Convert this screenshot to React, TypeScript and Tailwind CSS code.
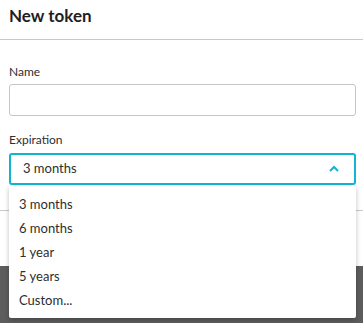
import React from "react";

const options = ["3 months", "6 months", "1 year", "5 years", "Custom..."];

export default function App() {
  return (
    <div className="relative w-[363px] h-[323px] overflow-hidden bg-[#5d5d5d] font-['Lato',sans-serif] text-[#2e2e2e]">
      <div className="bg-white">
        <div className="h-[40px] border-b border-[#c9c9c9] pl-[9px] pt-[5px]">
          <h2 className="text-[17px] leading-[22px] font-bold text-[#1e1e1e]">New token</h2>
        </div>
        <div className="pl-[9px] pr-[7px] pt-[24px] h-[170px]">
          <div className="text-[12px] leading-[16px] mb-[4px]">Name</div>
          <div className="h-[32px] border border-[#c6c6c6] rounded-[3px]" />
          <div className="text-[12px] leading-[16px] mt-[16px] mb-[5px]">Expiration</div>
          <div className="relative">
            <div className="h-[32px] border-2 border-[#12b5d1] rounded-[3px] flex items-center justify-between pl-[12px] pr-[12px]">
              <span className="text-[13px]">3 months</span>
              <svg width="12" height="8" viewBox="0 0 12 8" className="mr-[2px]">
                <path d="M2 6 L6 2 L10 6" fill="none" stroke="#12b5d1" strokeWidth="2" />
              </svg>
            </div>
            <div className="absolute left-0 right-0 top-[33px] z-10 bg-white rounded-b-[2px] shadow-[0_2px_5px_rgba(0,0,0,0.25)] pt-[7px] pb-[5px]">
              {options.map((o) => (
                <div key={o} className="h-[24px] flex items-center px-[10px] text-[13px]">
                  {o}
                </div>
              ))}
            </div>
          </div>
        </div>
        <div className="h-[56px] border-t border-[#c9c9c9]" />
      </div>
    </div>
  );
}
